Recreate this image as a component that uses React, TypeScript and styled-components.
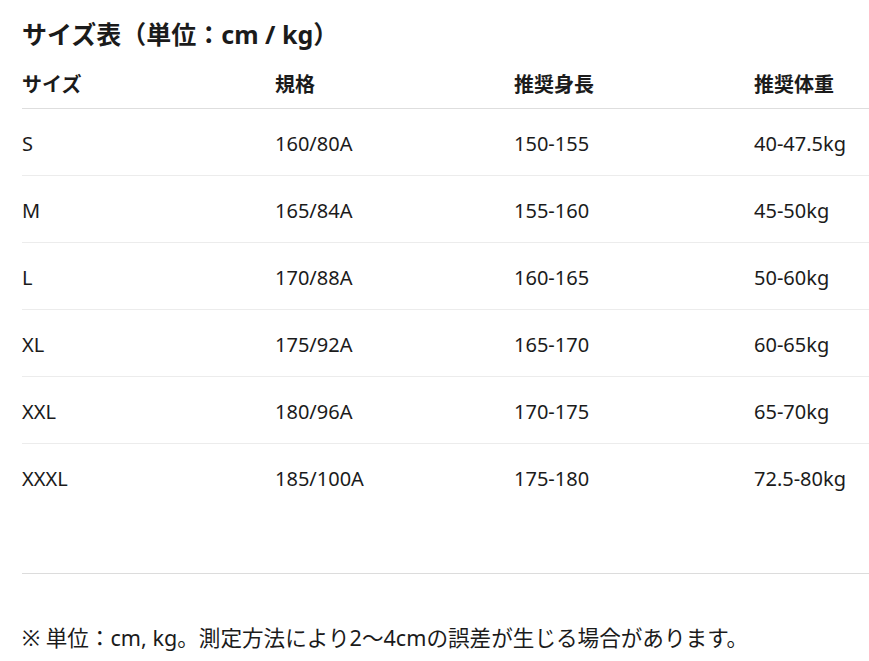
import React from 'react';
import styled, { createGlobalStyle } from 'styled-components';

interface SizeRow {
    size: string;
    spec: string;
    height: string;
    weight: string;
};

const rows: SizeRow[] = [
    { size: 'S', spec: '160/80A', height: '150-155', weight: '40-47.5kg' },
    { size: 'M', spec: '165/84A', height: '155-160', weight: '45-50kg' },
    { size: 'L', spec: '170/88A', height: '160-165', weight: '50-60kg' },
    { size: 'XL', spec: '175/92A', height: '165-170', weight: '60-65kg' },
    { size: 'XXL', spec: '180/96A', height: '170-175', weight: '65-70kg' },
    { size: 'XXXL', spec: '185/100A', height: '175-180', weight: '72.5-80kg' },
];

const GlobalStyle = createGlobalStyle`
    body {
        margin: 0;
        background: #ffffff;
        color: #1b1b1b;
        font-family: "Noto Sans", "Noto Sans CJK JP", sans-serif;
    }
`;

const Page = styled.div`
    padding: 16px 0 0 22px;
`;

const Title = styled.h2`
    margin: 0 0 19px;
    font-size: 25px;
    line-height: 36px;
    font-weight: 700;
`;

const Grid = styled.div`
    display: grid;
    grid-template-columns: 253px 239px 240px 1fr;
`;

const Row = styled(Grid)<{ $last?: boolean }>`
    padding: 21px 0 17px;
    border-bottom: 1px solid ${props => props.$last ? 'transparent' : '#ececec'};
    font-size: 20px;
    line-height: 28px;
`;

const HeadRow = styled(Grid)`
    padding-bottom: 9px;
    border-bottom: 1px solid #dedede;
    font-size: 20px;
    line-height: 28px;
    font-weight: 700;
`;

const Cell = styled.div`
    white-space: nowrap;
`;

const Divider = styled.hr`
    margin: 62px 0 0;
    border: 0;
    border-top: 1px solid #dcdcdc;
`;

const Note = styled.p`
    margin: 48px 0 0;
    font-size: 21.6px;
    line-height: 32px;
`;

const App: React.FC = (): JSX.Element => {
    return (
        <Page>
            <GlobalStyle />
            <Title>サイズ表（単位：cm / kg）</Title>
            <HeadRow>
                <Cell>サイズ</Cell>
                <Cell>規格</Cell>
                <Cell>推奨身長</Cell>
                <Cell>推奨体重</Cell>
            </HeadRow>
            {rows.map((r, i) => (
                <Row key={r.size} $last={i === rows.length - 1}>
                    <Cell>{r.size}</Cell>
                    <Cell>{r.spec}</Cell>
                    <Cell>{r.height}</Cell>
                    <Cell>{r.weight}</Cell>
                </Row>
            ))}
            <Divider />
            <Note>※ 単位：cm, kg。測定方法により2〜4cmの誤差が生じる場合があります。</Note>
        </Page>
    );
}

export default App;
